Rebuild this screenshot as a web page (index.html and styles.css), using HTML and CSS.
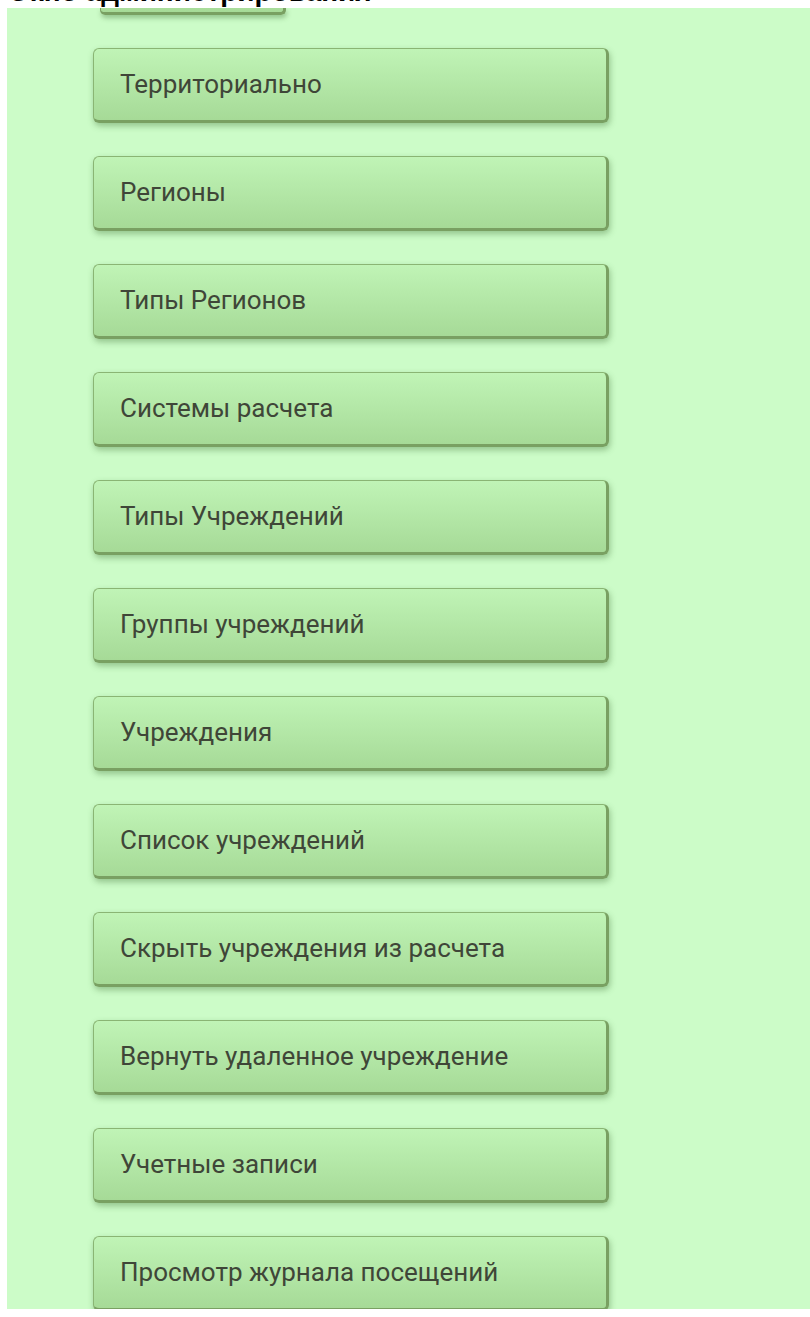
FILE: index.html
```html
<!DOCTYPE html>
<html lang="ru">
<head>
<meta charset="utf-8">
<title>Окно администрирования</title>
<link rel="stylesheet" href="styles.css">
</head>
<body>
<header class="top-bar">
  <h1 class="top-title">Окно администрирования</h1>
</header>
<main class="admin-panel">
  <div class="btn-tail"></div>
  <nav class="menu">
    <a class="menu-btn" href="#">Территориально</a>
    <a class="menu-btn" href="#">Регионы</a>
    <a class="menu-btn" href="#">Типы Регионов</a>
    <a class="menu-btn" href="#">Системы расчета</a>
    <a class="menu-btn" href="#">Типы Учреждений</a>
    <a class="menu-btn" href="#">Группы учреждений</a>
    <a class="menu-btn" href="#">Учреждения</a>
    <a class="menu-btn" href="#">Список учреждений</a>
    <a class="menu-btn" href="#">Скрыть учреждения из расчета</a>
    <a class="menu-btn" href="#">Вернуть удаленное учреждение</a>
    <a class="menu-btn" href="#">Учетные записи</a>
    <a class="menu-btn" href="#">Просмотр журнала посещений</a>
  </nav>
</main>
</body>
</html>
```
FILE: styles.css
```css
html, body {
  margin: 0;
  padding: 0;
  background: #ffffff;
}

body {
  font-family: Roboto, "Noto Sans", sans-serif;
}

/* page heading, scrolled mostly out of view */
.top-bar {
  height: 8px;
  overflow: hidden;
  padding-left: 8px;
}

.top-title {
  margin: -24px 0 0;
  font-family: "Liberation Sans", Arial, sans-serif;
  font-size: 28px;
  line-height: 32px;
  font-weight: bold;
  color: #000;
  white-space: nowrap;
}

.admin-panel {
  margin-left: 7px;
  height: 1301px;
  background: #ccfcc8;
  overflow: hidden;
}

/* bottom of the button above the visible area */
.btn-tail {
  width: 182px;
  height: 4px;
  margin-left: 93px;
  background: linear-gradient(#a9dd9b, #a6da97);
  border: 3px solid #79a062;
  border-top: none;
  border-left-width: 1px;
  border-radius: 0 0 5px 5px;
  box-shadow: 1px 3px 5px rgba(60, 110, 50, 0.4);
}

.menu {
  display: flex;
  flex-direction: column;
  gap: 33px;
  padding: 33px 0 0 86px;
}

.menu-btn {
  box-sizing: border-box;
  display: flex;
  align-items: center;
  width: 516px;
  height: 75px;
  padding: 0 0 2px 26px;
  background: linear-gradient(#c0f4b6, #a6da97);
  border: 1px solid #80a86a;
  border-right-width: 3px;
  border-bottom-width: 3px;
  border-color: #8ab574 #79a062 #79a062 #8ab574;
  border-radius: 6px;
  box-shadow: 1px 3px 6px rgba(60, 110, 50, 0.4);
  color: #3f4638;
  font-size: 26px;
  text-decoration: none;
}
```
